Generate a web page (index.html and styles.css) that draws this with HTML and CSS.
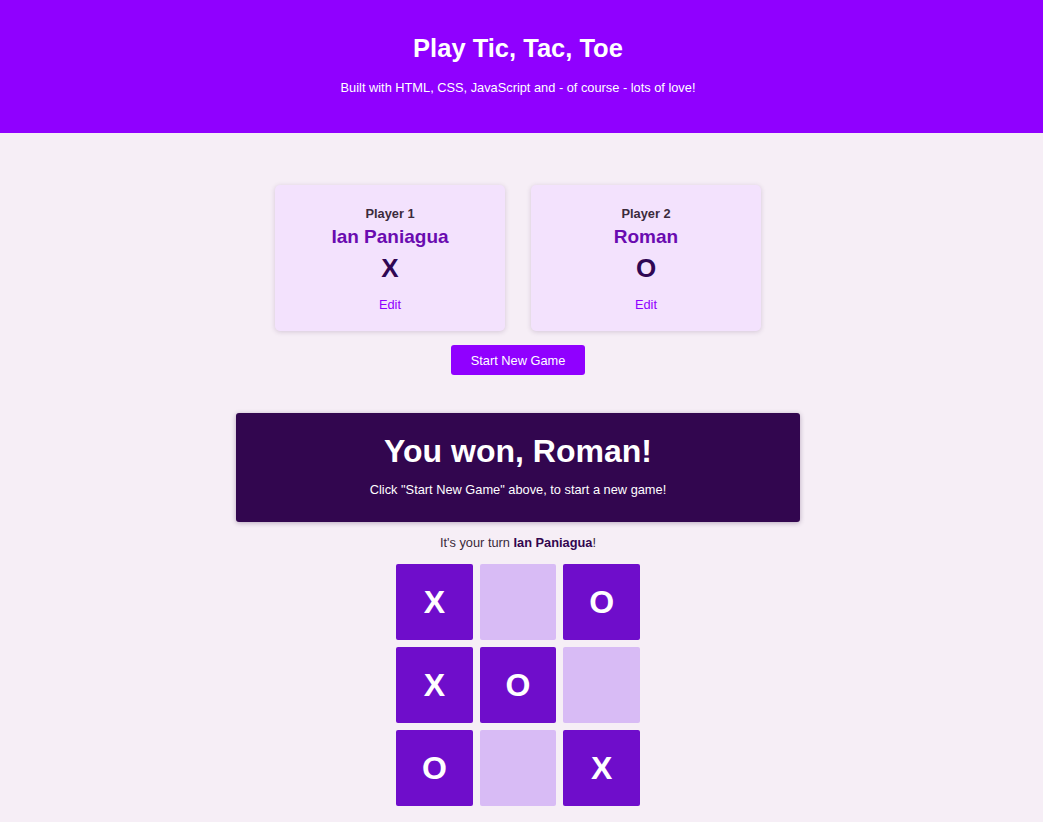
FILE: index.html
```html
<!DOCTYPE html>
<html lang="en">
<head>
<meta charset="utf-8">
<title>Tic Tac Toe</title>
<link rel="stylesheet" href="styles.css">
</head>
<body>
<header class="site-header">
  <div class="wrap">
    <h1 class="title">Play Tic, Tac, Toe</h1>
    <p class="subtitle">Built with HTML, CSS, JavaScript and - of course - lots of love!</p>
  </div>
</header>
<main class="wrap main">
  <section class="players">
    <article class="card">
      <h2 class="card-label">Player 1</h2>
      <h3 class="card-name">Ian Paniagua</h3>
      <p class="card-symbol">X</p>
      <button class="edit-btn">Edit</button>
    </article>
    <article class="card">
      <h2 class="card-label">Player 2</h2>
      <h3 class="card-name">Roman</h3>
      <p class="card-symbol">O</p>
      <button class="edit-btn">Edit</button>
    </article>
  </section>
  <button class="start-btn">Start New Game</button>
  <section class="game">
    <div class="game-over">
      <h2 class="game-over-title">You won, Roman!</h2>
      <p class="game-over-text">Click "Start New Game" above, to start a new game!</p>
    </div>
    <p class="turn">It's your turn <span class="turn-name">Ian Paniagua</span>!</p>
    <ol class="board">
      <li class="cell filled">X</li>
      <li class="cell"></li>
      <li class="cell filled">O</li>
      <li class="cell filled">X</li>
      <li class="cell filled">O</li>
      <li class="cell"></li>
      <li class="cell filled">O</li>
      <li class="cell"></li>
      <li class="cell filled">X</li>
    </ol>
  </section>
</main>
</body>
</html>
```

FILE: styles.css
```css
* { box-sizing: border-box; }

html, body {
  margin: 0;
  padding: 0;
}

body {
  background: #f6eef6;
  font-family: "Liberation Sans", Arial, sans-serif;
  color: #3a2a3a;
  font-size: 12.8px;
}

.wrap {
  width: 1036px;
}

.site-header {
  background: #9000ff;
  color: #ffffff;
  height: 133px;
  padding-top: 33px;
  text-align: center;
}

.title {
  margin: 0;
  font-size: 25.5px;
  line-height: 30px;
  font-weight: 700;
}

.subtitle {
  margin: 15px 0 0;
  font-size: 12.8px;
  line-height: 20px;
}

.main {
  display: flex;
  flex-direction: column;
  align-items: center;
  padding-top: 52px;
  padding-bottom: 20px;
}

.players {
  display: flex;
  gap: 26px;
}

.card {
  width: 230px;
  height: 146px;
  background: #f3e2fd;
  border-radius: 5px;
  box-shadow: 0 1px 5px rgba(60, 20, 80, 0.18);
  text-align: center;
  padding-top: 20px;
  display: flex;
  flex-direction: column;
  align-items: center;
}

.card-label {
  margin: 0;
  font-size: 12.8px;
  line-height: 17px;
  font-weight: 700;
  color: #3b2b3b;
}

.card-name {
  margin: 3px 0 0;
  font-size: 19px;
  line-height: 23px;
  font-weight: 700;
  color: #6a0bb0;
}

.card-symbol {
  margin: 5px 0 0;
  font-size: 26px;
  line-height: 30px;
  font-weight: 700;
  color: #2f0754;
}

.edit-btn {
  margin-top: 14px;
  background: none;
  border: none;
  padding: 0;
  font-family: inherit;
  font-size: 12.8px;
  line-height: 16px;
  color: #9000ff;
  cursor: pointer;
}

.start-btn {
  margin-top: 14px;
  width: 134px;
  height: 30px;
  background: #9000ff;
  color: #ffffff;
  border: none;
  border-radius: 3px;
  font-family: inherit;
  font-size: 12.8px;
  padding: 1px 0 0;
  cursor: pointer;
}

.game {
  margin-top: 38px;
  display: flex;
  flex-direction: column;
  align-items: center;
}

.game-over {
  width: 564px;
  height: 109px;
  background: #32064f;
  color: #ffffff;
  border-radius: 3px;
  box-shadow: 0 1px 5px rgba(40, 0, 60, 0.3);
  text-align: center;
  padding-top: 20px;
}

.game-over-title {
  margin: 0;
  font-size: 32px;
  line-height: 36px;
  font-weight: 700;
}

.game-over-text {
  margin: 13px 0 0;
  font-size: 12.8px;
  line-height: 16px;
}

.turn {
  margin: 13px 0 0;
  font-size: 12.8px;
  line-height: 16px;
  color: #3a2a3a;
}

.turn-name {
  font-weight: 700;
  color: #32064f;
}

.board {
  list-style: none;
  margin: 13px 0 0;
  padding: 0;
  width: 244px;
  display: grid;
  grid-template-columns: repeat(3, 1fr);
  grid-auto-rows: 76px;
  gap: 7px;
}

.cell {
  background: #d8bbf5;
  border-radius: 2px;
  display: flex;
  align-items: center;
  justify-content: center;
  color: #ffffff;
  font-size: 32px;
  font-weight: 700;
}

.cell.filled {
  background: #6f0dcb;
}
```
